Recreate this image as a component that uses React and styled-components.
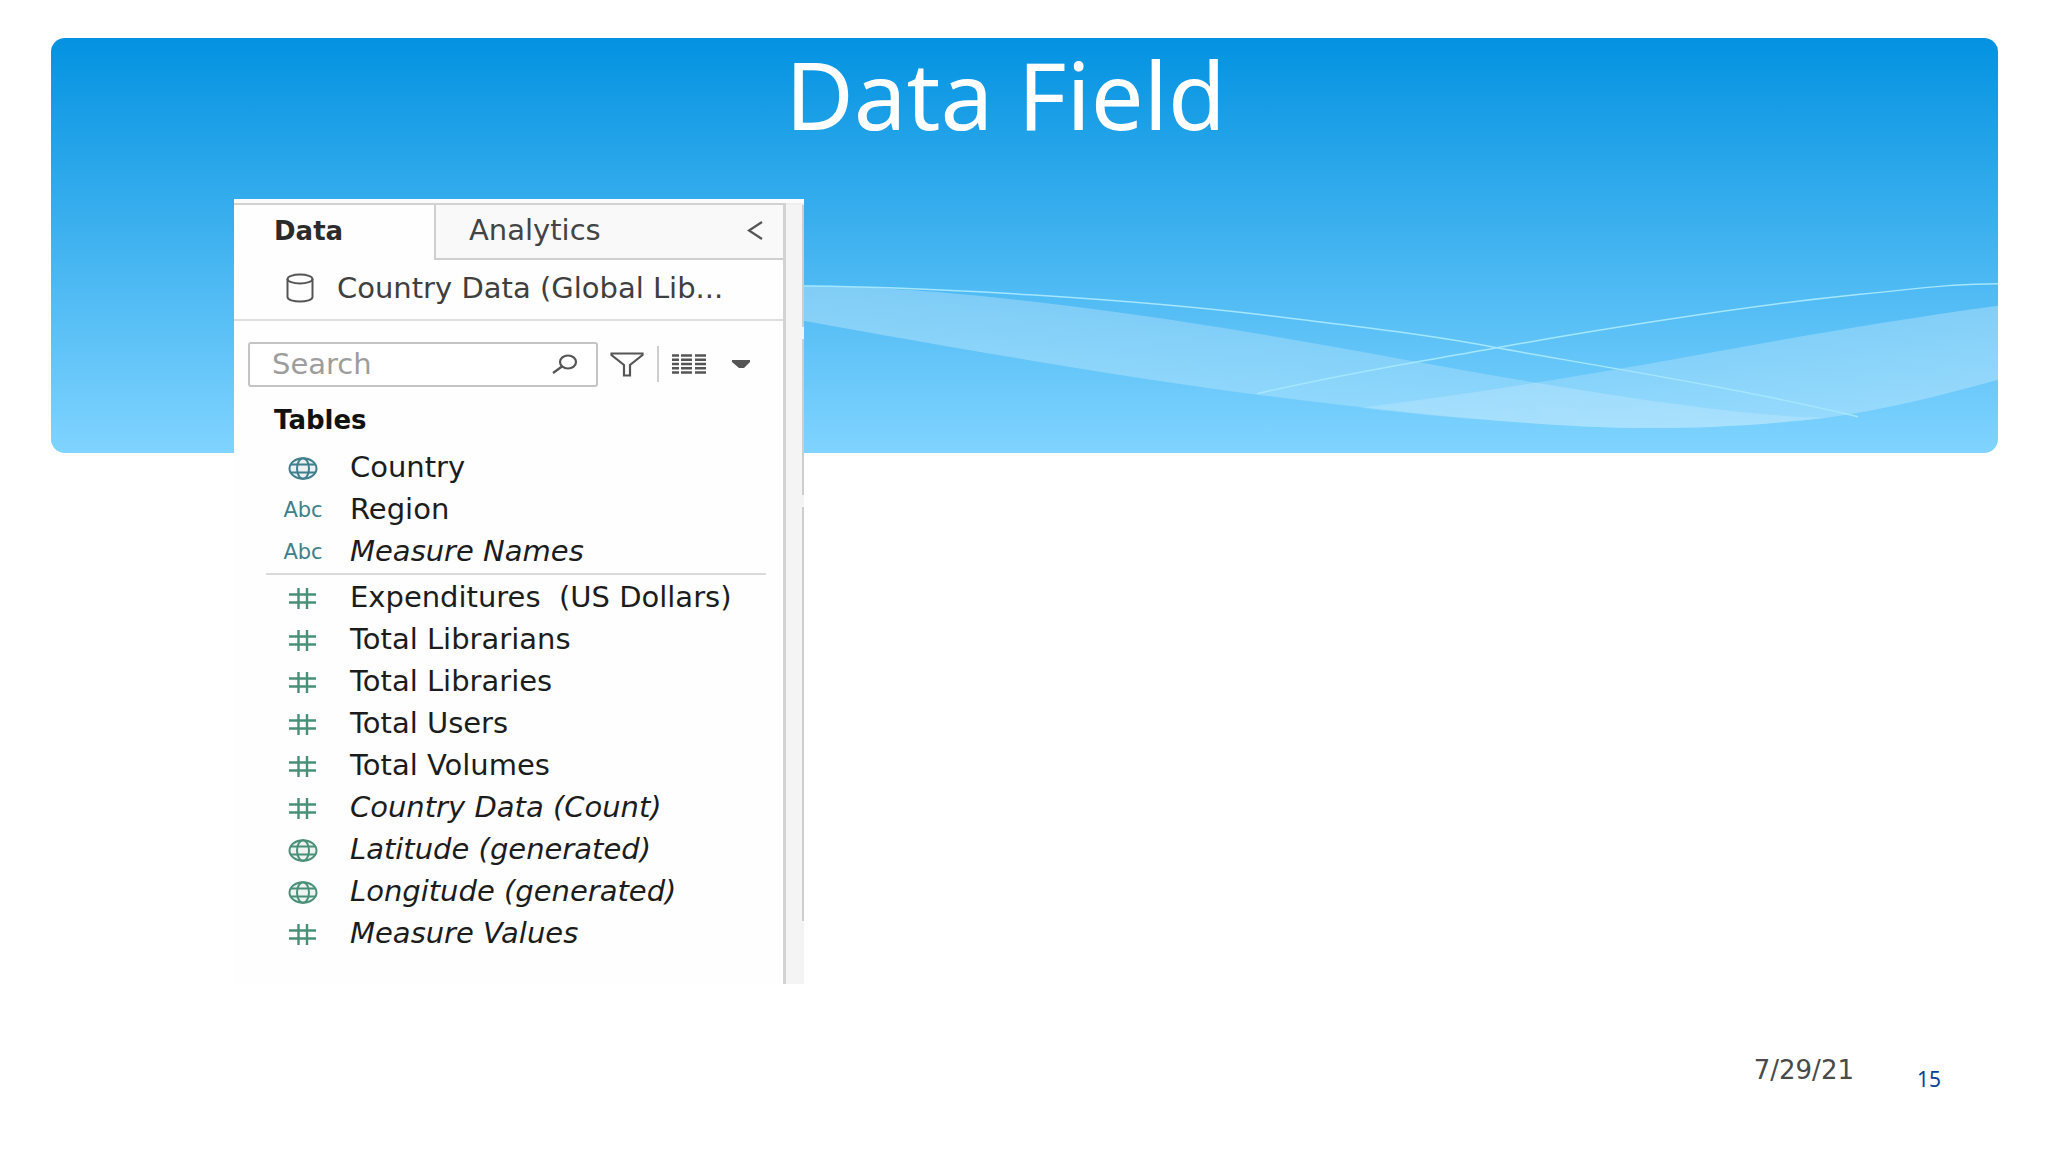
import React from 'react';
import styled, { createGlobalStyle } from 'styled-components';

const GlobalStyle = createGlobalStyle`
  * {
    box-sizing: border-box;
  }
  body {
    margin: 0;
    background: #fff;
    font-family: 'DejaVu Sans', Verdana, sans-serif;
  }
  button, input {
    font: inherit;
    color: inherit;
    border: 0;
    padding: 0;
    background: none;
  }
`;

const Slide = styled.main`
  display: flex;
  flex-direction: column;
  min-height: 100vh;
  padding: 38px 50px 57px 51px;
`;

const Banner = styled.header`
  display: grid;
  height: 36vh;
  min-height: 320px;
  border-radius: 14px;
  background: linear-gradient(#0392e1, #80d4ff);
`;

const Waves = styled.svg`
  grid-area: 1 / 1;
  width: 100%;
  height: 100%;
`;

const Title = styled.h1`
  grid-area: 1 / 1;
  margin: 0;
  padding-right: 38px;
  color: #fff;
  font-family: 'Noto Sans', 'Open Sans', sans-serif;
  font-size: 94px;
  font-weight: 400;
  line-height: 112px;
  text-align: center;
`;

const Panel = styled.section`
  display: flex;
  width: 100%;
  max-width: 570px;
  margin: -254px 0 0 183px;
  padding-top: 4px;
  background: #fbfbfb;
`;

const PanelBody = styled.div`
  flex: 1;
  min-width: 0;
  padding-bottom: 30px;
  border-top: 2px solid #d2d2d2;
  border-right: 3px solid #d2d2d2;
  background: #fefefe;
`;

const Gutter = styled.div`
  display: flex;
  flex-direction: column;
  align-items: flex-end;
  gap: 12px;
  width: 18px;
  border-top: 2px solid #efefef;
  background: #f4f4f4;
`;

const GutterMark = styled.span`
  width: 2px;
  height: ${(props) => props.$length}px;
  background: #cdcdcd;
`;

const Tabs = styled.div`
  display: grid;
  grid-template-columns: 200px 1fr;
  height: 55px;
`;

const DataTab = styled.button`
  padding: 0 0 3px 40px;
  color: #2b2b2b;
  font-size: 26px;
  font-weight: 700;
  line-height: 32px;
  text-align: left;
`;

const OtherTabs = styled.div`
  display: flex;
  align-items: center;
  justify-content: space-between;
  padding: 0 20px 2px 33px;
  border-left: 2px solid #cfcfcf;
  border-bottom: 2px solid #cfcfcf;
  background: #f9f9f9;
`;

const Tab = styled.button`
  color: #444;
  font-size: 29px;
  line-height: 32px;
`;

const IconButton = styled.button`
  display: flex;
  color: #555;
`;

const Source = styled.div`
  display: flex;
  align-items: center;
  gap: 23px;
  height: 61px;
  padding: 0 24px 3px 52px;
  border-bottom: 2px solid #dedede;
  color: #3f3f3f;
  font-size: 29px;
  line-height: 32px;
  white-space: nowrap;
`;

const Toolbar = styled.div`
  display: flex;
  align-items: center;
  padding: 21px 33px 0 14px;
  color: #555;
`;

const SearchBox = styled.label`
  display: flex;
  align-items: center;
  flex: 1;
  min-width: 0;
  height: 45px;
  padding: 0 18px 0 22px;
  border: 2px solid #c4c4c4;
  border-radius: 3px;
  background: #fff;
`;

const SearchInput = styled.input`
  flex: 1;
  min-width: 0;
  font-size: 29px;
  line-height: 32px;
  outline: none;
  &::placeholder {
    color: #9d9d9d;
    opacity: 1;
  }
`;

const Tools = styled.div`
  display: flex;
  align-items: center;
  gap: 13px;
  padding-left: 12px;
`;

const Separator = styled.span`
  width: 2px;
  height: 36px;
  background: #cfcfcf;
`;

const ViewButton = styled(IconButton)`
  align-items: center;
  gap: 26px;
`;

const Heading = styled.h2`
  margin: 0;
  padding: 17px 0 10px 40px;
  color: #111;
  font-size: 26px;
  font-weight: 700;
  line-height: 32px;
`;

const Fields = styled.ul`
  margin: 0;
  padding: 0;
  list-style: none;
`;

const Field = styled.li`
  display: grid;
  grid-template-columns: 44px 1fr;
  align-items: center;
  gap: 25px;
  height: 42px;
  padding-left: 47px;
  color: #1c1c1c;
  font-size: 29px;
  font-style: ${(props) => (props.$generated ? 'italic' : 'normal')};
  line-height: 32px;
  white-space: pre;
`;

const FieldIcon = styled.span`
  display: flex;
  justify-content: center;
  padding-top: 3px;
  color: ${(props) => props.$color};
  font-size: 21px;
  font-style: normal;
  line-height: 24px;
`;

const Divider = styled.hr`
  height: 2px;
  margin: 1px 17px 1px 32px;
  border: 0;
  background: #dadada;
`;

const Footer = styled.footer`
  display: flex;
  align-items: flex-end;
  justify-content: flex-end;
  gap: 63px;
  margin-top: auto;
  padding-right: 57px;
`;

const SlideDate = styled.time`
  padding-bottom: 9px;
  color: #4a4a4a;
  font-size: 26px;
  line-height: 32px;
`;

const PageNumber = styled.span`
  color: #0c4093;
  font-family: 'Noto Sans', 'Open Sans', sans-serif;
  font-size: 21px;
  line-height: 32px;
`;

const BLUE = '#3f7f8c';
const GREEN = '#4a9078';

const dimensions = [
  { name: 'Country', type: 'geo' },
  { name: 'Region', type: 'text' },
  { name: 'Measure Names', type: 'text', generated: true },
];

const measures = [
  { name: 'Expenditures  (US Dollars)', type: 'number' },
  { name: 'Total Librarians', type: 'number' },
  { name: 'Total Libraries', type: 'number' },
  { name: 'Total Users', type: 'number' },
  { name: 'Total Volumes', type: 'number' },
  { name: 'Country Data (Count)', type: 'number', generated: true },
  { name: 'Latitude (generated)', type: 'geo', generated: true },
  { name: 'Longitude (generated)', type: 'geo', generated: true },
  { name: 'Measure Values', type: 'number', generated: true },
];

const GlobeIcon = () => (
  <svg width="30" height="23" viewBox="0 0 30 23" fill="none" stroke="currentColor" strokeWidth="2">
    <ellipse cx="15" cy="11.5" rx="13.5" ry="10.3" fill="currentColor" fillOpacity="0.1" />
    <ellipse cx="15" cy="11.5" rx="6" ry="10.3" />
    <path d="M3 7.500h24M3 15.500h24" />
  </svg>
);

const HashIcon = () => (
  <svg width="28" height="21" viewBox="0 0 28 21" fill="none" stroke="currentColor" strokeWidth="2.400">
    <path d="M9.500 0v21M18 0v21M0 6.500h27M0 14.500h27" />
  </svg>
);

const DatabaseIcon = () => (
  <svg width="28" height="30" viewBox="0 0 28 30" fill="none" stroke="#555" strokeWidth="2">
    <ellipse cx="14" cy="6" rx="12.500" ry="4.500" />
    <path d="M1.500 6v18c0 6 25 6 25 0V6" />
  </svg>
);

const ChevronIcon = () => (
  <svg width="16" height="19" viewBox="0 0 16 19" fill="none" stroke="currentColor" strokeWidth="2.200">
    <path d="M15 1L2 9.500L15 18" />
  </svg>
);

const SearchIcon = () => (
  <svg width="26" height="20" viewBox="0 0 26 20" fill="none" stroke="#555" strokeWidth="2.200">
    <ellipse cx="16" cy="8" rx="8" ry="6.500" />
    <path d="M10 12.500L1 19" />
  </svg>
);

const FilterIcon = () => (
  <svg width="34" height="25" viewBox="0 0 34 25" fill="none" stroke="currentColor" strokeWidth="2.200">
    <path d="M1.500 1.500h31v1.500L20 13v10.500h-6V13L1.500 3z" />
  </svg>
);

const GridIcon = () => (
  <svg width="34" height="20" viewBox="0 0 34 20" fill="none" stroke="currentColor" strokeWidth="2.400">
    <path d="M0 1.500h34M0 5.800h34M0 10h34M0 14.300h34M0 18.500h34" strokeDasharray="7 2 11 3 11 0" />
  </svg>
);

const CaretIcon = () => (
  <svg width="18" height="9" viewBox="0 0 18 9" fill="currentColor">
    <path d="M0 0h18v2l-6 6h-5l-7-6z" />
  </svg>
);

const FieldRow = ({ field, color }) => (
  <Field $generated={field.generated}>
    <FieldIcon $color={color}>
      {field.type === 'geo' && <GlobeIcon />}
      {field.type === 'number' && <HashIcon />}
      {field.type === 'text' && 'Abc'}
    </FieldIcon>
    {field.name}
  </Field>
);

class App extends React.Component {
  constructor (props) {
    super(props);
    this.state = { query: '' };
    this.queryChangeHandler = this.queryChangeHandler.bind(this);
  }

  queryChangeHandler (event) {
    this.setState({ query: event.target.value });
  }

  render () {
    return (
      <Slide>
        <GlobalStyle />
        <Banner>
          <Waves viewBox="51 38 1947 415" preserveAspectRatio="none" fill="none" aria-hidden="true">
            <defs>
              <linearGradient id="leftWave">
                <stop offset="0" stopColor="#fff" stopOpacity="0.29" />
                <stop offset="1" stopColor="#fff" stopOpacity="0.16" />
              </linearGradient>
              <linearGradient id="rightWave">
                <stop offset="0" stopColor="#fff" stopOpacity="0.16" />
                <stop offset="1" stopColor="#fff" stopOpacity="0.27" />
              </linearGradient>
            </defs>
            <path
              fill="url(#leftWave)"
              d="M760 286C868 284 984 294 1135 315S1409 362 1536 383S1760 417 1826 418C1689 434 1594 428 1524 423S1360 408 1258 395S1000 357 760 313z"
            />
            <path
              fill="url(#rightWave)"
              d="M1360 408C1450 397 1545 382 1631 367S1850 326 1998 306V380C1937 397 1880 411 1826 418C1689 434 1594 428 1524 423S1420 415 1360 408z"
            />
            <path
              stroke="#a4e6ff"
              strokeWidth="1.500"
              d="M760 286C923 285 1147 301 1270 316S1440 337 1497 348S1740 388 1858 417M1257 394C1351 372 1420 362 1497 348S1731 308 1846 296S1950 285 1998 284"
            />
          </Waves>
          <Title>Data Field</Title>
        </Banner>
        <Panel>
          <PanelBody>
            <Tabs>
              <DataTab type="button">Data</DataTab>
              <OtherTabs>
                <Tab type="button">Analytics</Tab>
                <IconButton type="button" aria-label="Collapse"><ChevronIcon /></IconButton>
              </OtherTabs>
            </Tabs>
            <Source>
              <DatabaseIcon />
              Country Data (Global Lib...
            </Source>
            <Toolbar>
              <SearchBox>
                <SearchInput
                  type="text"
                  placeholder="Search"
                  aria-label="Search"
                  value={this.state.query}
                  onChange={this.queryChangeHandler}
                />
                <SearchIcon />
              </SearchBox>
              <Tools>
                <IconButton type="button" aria-label="Filter"><FilterIcon /></IconButton>
                <Separator />
                <ViewButton type="button" aria-label="View">
                  <GridIcon />
                  <CaretIcon />
                </ViewButton>
              </Tools>
            </Toolbar>
            <Heading>Tables</Heading>
            <Fields>
              {dimensions.map((field) => <FieldRow key={field.name} field={field} color={BLUE} />)}
            </Fields>
            <Divider />
            <Fields>
              {measures.map((field) => <FieldRow key={field.name} field={field} color={GREEN} />)}
            </Fields>
          </PanelBody>
          <Gutter>
            <GutterMark $length={122} />
            <GutterMark $length={156} />
            <GutterMark $length={414} />
          </Gutter>
        </Panel>
        <Footer>
          <SlideDate dateTime="2021-07-29">7/29/21</SlideDate>
          <PageNumber>15</PageNumber>
        </Footer>
      </Slide>
    );
  }
}

export default App;
